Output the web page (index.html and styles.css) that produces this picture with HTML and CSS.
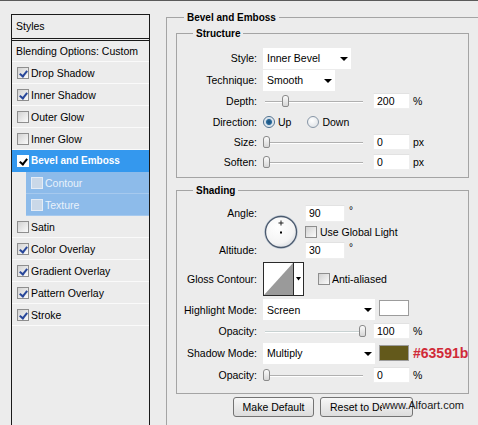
FILE: index.html
```html
<!DOCTYPE html>
<html>
<head>
<meta charset="utf-8">
<link rel="stylesheet" href="styles.css">
</head>
<body>
<div class="topline"></div>
<div class="main">
  <div class="styles-panel">
    <div class="panel-head">Styles</div>
    <ul class="style-list">
      <li class="item blend">Blending Options: Custom</li>
      <li class="item"><span class="cb on"></span>Drop Shadow</li>
      <li class="item"><span class="cb on"></span>Inner Shadow</li>
      <li class="item"><span class="cb"></span>Outer Glow</li>
      <li class="item"><span class="cb"></span>Inner Glow</li>
      <li class="item sel"><span class="cb on"></span>Bevel and Emboss</li>
      <li class="item sub"><span class="cb"></span>Contour</li>
      <li class="item sub"><span class="cb"></span>Texture</li>
      <li class="item"><span class="cb"></span>Satin</li>
      <li class="item"><span class="cb on"></span>Color Overlay</li>
      <li class="item"><span class="cb on"></span>Gradient Overlay</li>
      <li class="item"><span class="cb on"></span>Pattern Overlay</li>
      <li class="item"><span class="cb on"></span>Stroke</li>
    </ul>
  </div>

  <fieldset class="group outer">
    <legend>Bevel and Emboss</legend>

    <fieldset class="group box structure">
      <legend>Structure</legend>
      <div class="row r22">
        <span class="lbl">Style:</span>
        <span class="select w88">Inner Bevel</span>
      </div>
      <div class="row r22">
        <span class="lbl">Technique:</span>
        <span class="select w72">Smooth</span>
      </div>
      <div class="row r20">
        <span class="lbl">Depth:</span>
        <span class="slider"><span class="thumb" style="left:17px"></span></span>
        <span class="num">200</span><span class="unit">%</span>
      </div>
      <div class="row r21">
        <span class="lbl">Direction:</span>
        <span class="radio on"></span><span class="rtext">Up</span>
        <span class="radio second"></span><span class="rtext">Down</span>
      </div>
      <div class="row r20">
        <span class="lbl">Size:</span>
        <span class="slider"><span class="thumb" style="left:-2px"></span></span>
        <span class="num">0</span><span class="unit">px</span>
      </div>
      <div class="row r20">
        <span class="lbl">Soften:</span>
        <span class="slider"><span class="thumb" style="left:-2px"></span></span>
        <span class="num">0</span><span class="unit">px</span>
      </div>
    </fieldset>

    <fieldset class="group box shading">
      <legend>Shading</legend>
      <div class="angle-block">
        <span class="lbl a-lbl">Angle:</span>
        <span class="lbl alt-lbl">Altitude:</span>
        <svg class="dial" width="36" height="36" viewBox="0 0 36 36">
          <defs>
            <radialGradient id="dg" cx="0.4" cy="0.35" r="0.7">
              <stop offset="0" stop-color="#ffffff"/>
              <stop offset="0.7" stop-color="#f4f4f4"/>
              <stop offset="1" stop-color="#d4d8de"/>
            </radialGradient>
          </defs>
          <circle cx="18" cy="18" r="16.5" fill="url(#dg)" stroke="#c9d2dc" stroke-width="1"/>
          <circle cx="18" cy="18" r="15.5" fill="none" stroke="#4b5a6e" stroke-width="1.3"/>
          <path d="M18 6.5v5M15.5 9h5" stroke="#222" stroke-width="1"/>
          <rect x="17" y="17.5" width="2" height="2" fill="#000"/>
        </svg>
        <span class="a-ctl"><span class="num w40">90</span><span class="deg">°</span></span>
        <span class="g-ctl"><span class="cb"></span>Use Global Light</span>
        <span class="alt-ctl"><span class="num w40">30</span><span class="deg">°</span></span>
      </div>
      <div class="row r40">
        <span class="lbl">Gloss Contour:</span>
        <svg class="contour" width="41" height="34" viewBox="0 0 41 34">
          <rect x="0.5" y="0.5" width="40" height="33" fill="#fff" stroke="#2a2a2a"/>
          <polygon points="1,33 30,1 30,33" fill="#9a9a9a"/>
          <line x1="30.5" y1="1" x2="30.5" y2="33" stroke="#2a2a2a"/>
          <polygon points="33,15 38,15 35.5,18.5" fill="#000"/>
        </svg>
        <span class="cb aa"></span><span>Anti-aliased</span>
      </div>
      <div class="row r21">
        <span class="lbl">Highlight Mode:</span>
        <span class="select w112">Screen</span>
        <span class="swatch white"></span>
      </div>
      <div class="row r21">
        <span class="lbl">Opacity:</span>
        <span class="slider light"><span class="thumb" style="left:94px"></span></span>
        <span class="num">100</span><span class="unit">%</span>
      </div>
      <div class="row r24">
        <span class="lbl">Shadow Mode:</span>
        <span class="select w112">Multiply</span>
        <span class="swatch olive"></span>
        <span class="hex">#63591b</span>
      </div>
      <div class="row r20">
        <span class="lbl">Opacity:</span>
        <span class="slider"><span class="thumb" style="left:-2px"></span></span>
        <span class="num">0</span><span class="unit">%</span>
      </div>
    </fieldset>

    <div class="buttons">
      <button class="btn b-make">Make Default</button>
      <button class="btn b-reset"><span class="clip">Reset to Default</span></button>
    </div>
  </fieldset>
</div>
<div class="watermark">www.Alfoart.com</div>
</body>
</html>
```

FILE: styles.css
```css
* { box-sizing: border-box; }
html, body { margin: 0; padding: 0; }
body {
  width: 478px;
  height: 425px;
  overflow: hidden;
  position: relative;
  background: #ececec;
  font-family: "Liberation Sans", Arial, sans-serif;
  font-size: 10.5px;
  color: #000;
}
.topline { height: 1px; background: #5a5a5a; }
.main { display: flex; align-items: flex-start; height: 424px; overflow: hidden; }

/* left styles panel */
.styles-panel {
  flex: none;
  margin: 13px 0 0 11px;
  width: 139px;
  height: 420px;
  border: 1px solid #1a1a1a;
}
.panel-head {
  height: 24px;
  line-height: 23px;
  padding-left: 4px;
  border-bottom: 1px solid #1a1a1a;
}
.style-list {
  list-style: none;
  margin: 1px 0 0;
  padding: 0;
  border-top: 1px solid #1a1a1a;
}
.item {
  height: 22px;
  display: flex;
  align-items: center;
  padding-left: 5px;
  border-bottom: 1px solid #fafafa;
  white-space: nowrap;
}
.item.blend { height: 21px; padding-left: 4px; }
.cb {
  flex: none;
  position: relative;
  width: 12px;
  height: 12px;
  margin-right: 2px;
  border: 1px solid #8e8e8e;
  background: linear-gradient(135deg, #d2d2d2, #fbfbfb);
}
.cb.on::after {
  content: "";
  position: absolute;
  left: 3px;
  top: 1px;
  width: 3px;
  height: 6px;
  border: solid #28479a;
  border-width: 0 2px 2px 0;
  transform: rotate(38deg);
}
.item.sel {
  background: #3498ee;
  color: #fff;
  font-weight: bold;
  font-size: 10px;
  border-bottom-color: #3498ee;
}
.item.sel .cb { background: #fff; border-color: #fff; }
.item.sel .cb.on::after { border-color: #000; }
.item.sub {
  margin-left: 14px;
  background: #8dbbea;
  color: #e9f2fb;
  border-bottom-color: #a6c9ee;
}
.item.sub .cb { background: #cad8e8; border-color: #e4ecf6; }

/* group boxes */
.group {
  margin: 0;
  padding: 0;
  min-width: 0;
  border: 1px solid #a4a4a4;
}
.group > legend {
  font-weight: bold;
  font-size: 10px;
  line-height: 13px;
  padding: 0 3px;
}
.outer {
  flex: none;
  margin: 10px 0 0 16px;
  width: 330px;
  height: 420px;
  padding: 0 0 0 9px;
}
.outer > legend { margin-left: 8px; }
.box { width: 293px; }
.box > legend { margin-left: 16px; }
.structure { margin-top: 3px; padding: 7px 0 5px; }
.shading { margin-top: 6px; padding: 7px 0 8px; }

.row { display: flex; align-items: center; white-space: nowrap; }
.r20 { height: 20px; }
.r21 { height: 21px; }
.r22 { height: 22px; }
.r24 { height: 24px; }
.r40 { height: 40px; }
.lbl {
  flex: none;
  width: 80px;
  margin-right: 6px;
  text-align: right;
}

.select {
  flex: none;
  position: relative;
  height: 21px;
  display: flex;
  align-items: center;
  padding-left: 4px;
  background: #fff;
}
.select::after {
  content: "";
  position: absolute;
  right: 3px;
  top: 9px;
  border-left: 4px solid transparent;
  border-right: 4px solid transparent;
  border-top: 4px solid #000;
}
.w88 { width: 88px; }
.w72 { width: 72px; }
.w112 { width: 112px; }

.slider {
  flex: none;
  position: relative;
  width: 98px;
  height: 14px;
  margin-left: 2px;
}
.slider::before {
  content: "";
  position: absolute;
  left: 0;
  right: 0;
  top: 7px;
  height: 1px;
  background: #b0b0b0;
  box-shadow: 0 1px 0 #fff;
}
.slider.light::before { background: #c8d2d2; }
.thumb {
  position: absolute;
  top: 1px;
  width: 7px;
  height: 12px;
  border: 1px solid #8a8a8a;
  border-radius: 3px 3px 2px 2px;
  background: linear-gradient(#fbfbfb, #d6d6d6);
}
.num {
  flex: none;
  width: 37px;
  height: 16px;
  margin-left: 10px;
  padding-left: 3px;
  line-height: 14px;
  background: #fff;
  border: 1px solid #eeeeee;
  border-top-color: #e2e2e2;
}
.num.w40 { width: 40px; height: 17px; line-height: 15px; margin-left: 0; }
.unit { margin-left: 3px; }

.radio {
  flex: none;
  width: 12px;
  height: 12px;
  border-radius: 50%;
  border: 1px solid #8796a6;
  background: radial-gradient(circle at 40% 35%, #ffffff, #d8dde2);
}
.radio.on {
  border-color: #4d6f8e;
  background: radial-gradient(circle, #174f7d 0, #2a6a9a 2.5px, #cfdbe6 3.5px, #eef2f6 5px);
}
.radio.second { margin-left: 16px; }
.rtext { margin-left: 3px; }

.angle-block {
  display: grid;
  grid-template-columns: 80px 36px auto;
  grid-template-rows: 18px 19px 18px;
  column-gap: 6px;
  align-items: center;
}
.a-lbl { grid-column: 1; grid-row: 1; margin-right: 0; }
.alt-lbl { grid-column: 1; grid-row: 3; margin-right: 0; }
.dial { grid-column: 2; grid-row: 1 / 4; }
.a-ctl { grid-column: 3; grid-row: 1; display: flex; align-items: center; }
.g-ctl { grid-column: 3; grid-row: 2; display: flex; align-items: center; white-space: nowrap; }
.g-ctl .cb { margin-right: 3px; }
.alt-ctl { grid-column: 3; grid-row: 3; display: flex; align-items: center; }
.deg { margin-left: 4px; align-self: flex-start; font-size: 10px; }

.contour { flex: none; }
.cb.aa { margin-left: 14px; margin-right: 2px; }

.swatch {
  flex: none;
  width: 30px;
  height: 16px;
  margin-left: 4px;
  border: 1px solid #9c9c9c;
}
.swatch.white { background: #fff; margin-top: -3px; }
.swatch.olive { background: #63591b; }
.hex {
  margin-left: 4px;
  font-weight: bold;
  font-size: 14px;
  color: #d02a38;
}

.buttons {
  display: flex;
  gap: 6px;
  margin: 3px 0 0 57px;
}
.btn {
  height: 20px;
  padding: 0;
  font: inherit;
  color: #000;
  border: 1px solid #737373;
  border-radius: 3px;
  background: linear-gradient(#f7f7f7, #dcdcdc);
}
.b-make { width: 81px; }
.b-reset {
  width: 93px;
  text-align: left;
  padding-left: 9px;
}
.clip {
  display: block;
  width: 52px;
  overflow: hidden;
  white-space: nowrap;
}

.watermark {
  position: absolute;
  left: 382px;
  top: 399px;
  font-size: 11px;
  line-height: 13px;
  color: #1a1a1a;
}
```
